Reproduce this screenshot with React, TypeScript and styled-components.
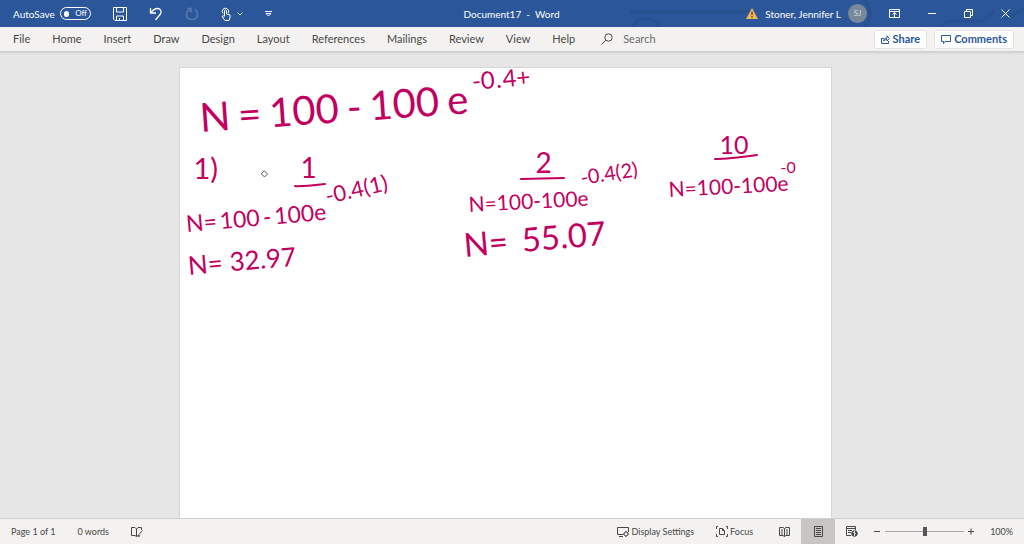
import React from "react";
import styled, { createGlobalStyle } from "styled-components";

const Global = createGlobalStyle`
  * { box-sizing: border-box; }
  body { margin: 0; font-family: Lato, "Open Sans", sans-serif; font-size: 11px; line-height: 16px; color: #484848; }
  button { font: inherit; color: inherit; background: none; border: 0; padding: 0; margin: 0; }
  svg { display: block; flex: none; }
`;

const Shell = styled.div`
  min-height: 100vh;
  display: flex;
  flex-direction: column;
  background: #e6e6e6;
`;

const TitleBar = styled.header`
  position: relative;
  display: grid;
  grid-template-columns: 1fr auto 1fr;
  align-items: center;
  height: 27px;
  padding: 0 14px 0 13px;
  background: #2b579a;
  color: #fff;
  font-size: 10px;
`;

const Pattern = styled.svg`
  position: absolute;
  top: 0;
  right: 0;
`;

const QuickAccess = styled.div`
  display: flex;
  align-items: center;
  gap: 22px;
`;

const AutoSave = styled.label`
  display: flex;
  align-items: center;
  gap: 5px;
`;

const Toggle = styled.button`
  display: flex;
  align-items: center;
  gap: 6px;
  width: 31px;
  height: 13px;
  padding: 0 3px;
  border: 1px solid #fff;
  border-radius: 7px;
  font-size: 8px;
  line-height: 11px;
  &::before { content: ""; width: 6px; height: 6px; border-radius: 50%; background: #fff; }
`;

const IconButton = styled.button<{ $dim?: boolean }>`
  display: flex;
  align-items: center;
  gap: 6px;
  opacity: ${(p) => (p.$dim ? 0.2 : 1)};
`;

const DocTitle = styled.h1`
  margin: 0;
  font-size: 10px;
  font-weight: 400;
  white-space: pre;
`;

const WindowTools = styled.div`
  position: relative;
  display: flex;
  align-items: center;
  justify-content: flex-end;
  gap: 28px;
`;

const Account = styled.button`
  display: flex;
  align-items: center;
  gap: 7px;
  margin-right: -6px;
`;

const Avatar = styled.span`
  width: 19px;
  height: 19px;
  border-radius: 50%;
  background: #78899a;
  color: #d5dce2;
  font-size: 8px;
  line-height: 19px;
  text-align: center;
`;

const Ribbon = styled.nav`
  display: flex;
  align-items: center;
  gap: 22px;
  height: 25px;
  padding: 0 10px 0 13px;
  background: #f3f2f1;
  border-bottom: 1px solid #d2d0ce;
  box-shadow: 0 1px 2px #cfcfcf;
`;

const Tab = styled.button``;

const Search = styled.label`
  display: flex;
  align-items: center;
  gap: 10px;
  margin-left: 4px;
`;

const SearchBox = styled.input`
  width: 80px;
  padding: 0;
  border: 0;
  outline: 0;
  background: none;
  font: inherit;
  &::placeholder { color: #6a6a6a; opacity: 1; }
`;

const RibbonActions = styled.div`
  display: flex;
  gap: 7px;
  margin-left: auto;
`;

const ActionButton = styled.button`
  display: flex;
  align-items: center;
  gap: 3px;
  height: 19px;
  padding: 0 6px;
  border: 1px solid #e6e5e4;
  border-radius: 2px;
  background: #fff;
  color: #2b579a;
  font-weight: 700;
`;

const Workspace = styled.main`
  flex: 1;
  display: flex;
  justify-content: center;
  padding: 15px 14px 0 0;
`;

const Paper = styled.article`
  position: relative;
  width: 100%;
  max-width: 653px;
  background: #fff;
  border: 1px solid #d6d6d6;
  border-bottom: 0;
`;

const Ink = styled.div<{ $x: number; $y: number; $size: number; $tilt?: number; $gap?: number }>`
  position: absolute;
  left: ${(p) => p.$x}px;
  top: ${(p) => p.$y}px;
  display: flex;
  gap: ${(p) => p.$gap ?? 0}px;
  color: #c2005f;
  font-size: ${(p) => p.$size}px;
  line-height: 1;
  white-space: nowrap;
  transform: rotate(${(p) => p.$tilt ?? 0}deg);
  transform-origin: left bottom;
`;

const Rules = styled.svg`
  position: absolute;
  left: 0;
  top: 0;
`;

const StatusBar = styled.footer`
  display: flex;
  align-items: center;
  height: 26px;
  padding: 0 11px;
  background: #f3f2f1;
  border-top: 1px solid #d2d0ce;
  font-size: 9px;
`;

const StatusGroup = styled.div`
  display: flex;
  align-items: center;
  gap: 22px;
`;

const StatusRight = styled.div`
  display: flex;
  align-items: center;
  gap: 22px;
  margin-left: auto;
`;

const StatusButton = styled.button`
  display: flex;
  align-items: center;
  gap: 2px;
`;

const Views = styled.div`
  display: flex;
  margin-left: -8px;
`;

const ViewButton = styled.button<{ $active?: boolean }>`
  display: flex;
  align-items: center;
  justify-content: center;
  width: 34px;
  height: 25px;
  background: ${(p) => (p.$active ? "#c8c6c4" : "none")};
`;

const Zoom = styled.div`
  display: flex;
  align-items: center;
  gap: 4px;
  margin-left: -17px;
`;

const Slider = styled.input`
  width: 79px;
  height: 12px;
  margin: 0;
  appearance: none;
  background: linear-gradient(#a6a6a6, #a6a6a6) center / 100% 1px no-repeat;
  &::-webkit-slider-thumb { appearance: none; width: 4px; height: 9px; background: #555; }
`;

const ZoomValue = styled.button`
  margin-left: 11px;
`;

const Icon = ({ w, h, children, sw = 1 }: { w: number; h: number; sw?: number; children: React.ReactNode }) => (
  <svg width={w} height={h} viewBox={`0 0 ${w} ${h}`} fill="none" stroke="currentColor" strokeWidth={sw} aria-hidden="true">
    {children}
  </svg>
);

const tabs = ["File", "Home", "Insert", "Draw", "Design", "Layout", "References", "Mailings", "Review", "View", "Help"];

const notes = [
  { x: 21, y: 29, size: 40, tilt: -4, gap: 8, parts: ["N", "=", "100", "-", "100", "e"] },
  { x: 293, y: 1, size: 24, tilt: -5, gap: 1, parts: ["-0", ".", "4+"] },
  { x: 14, y: 85, size: 29, parts: ["1)"] },
  { x: 121, y: 85, size: 28, parts: ["1"] },
  { x: 7, y: 144, size: 23, tilt: -5, gap: 3, parts: ["N=", "100", "-", "100e"] },
  { x: 148, y: 117, size: 22, tilt: -13, parts: ["-0.4(1)"] },
  { x: 9, y: 184, size: 26, tilt: -5, gap: 7, parts: ["N=", "32.97"] },
  { x: 356, y: 80, size: 28, parts: ["2"] },
  { x: 289, y: 125, size: 21, tilt: -3, parts: ["N=100", "-", "100e"] },
  { x: 402, y: 99, size: 20, tilt: -9, parts: ["-0.4(2)"] },
  { x: 285, y: 160, size: 33, tilt: -5, gap: 14, parts: ["N=", "55.07"] },
  { x: 540, y: 64, size: 25, parts: ["10"] },
  { x: 489, y: 110, size: 21, tilt: -3, parts: ["N=100", "-", "100e"] },
  { x: 601, y: 91, size: 16, parts: ["-0"] },
];

export default function App() {
  return (
    <Shell>
      <Global />
      <TitleBar>
        <Pattern width="404" height="27" fill="none" stroke="#28518f" strokeWidth="3" aria-hidden="true">
          <path d="M10 12H130M12 27C18 16 34 16 40 27M244 0C252 8 252 18 244 27M318 27L330 21H362L374 12M385 20L404 8" />
        </Pattern>
        <QuickAccess>
          <AutoSave htmlFor="autosave">
            AutoSave
            <Toggle id="autosave" role="switch" aria-checked="false">Off</Toggle>
          </AutoSave>
          <IconButton aria-label="Save">
            <Icon w={14} h={14}><path d="M.5.5h13v13H2l-1.500-1.500zM3.500.5V5h7V.5M3.500 13.500V9h7v4.500M6.500 11v2" /></Icon>
          </IconButton>
          <IconButton aria-label="Undo">
            <Icon w={14} h={14} sw={1.3}><path d="M1.500 1v5H7M2 5.500C4 3 6 1.500 8.500 1.500c3 0 4.500 3 3 5.500L6.500 13" /></Icon>
          </IconButton>
          <IconButton aria-label="Redo" $dim>
            <Icon w={14} h={14} sw={1.6}><path d="M2 1.500h4v4M5 3C0 4 0 12 6.500 12.500S14 6 10 2.500" /></Icon>
          </IconButton>
          <IconButton aria-label="Touch mode">
            <Icon w={10} h={14}><path d="M3.500 9V3.500q1-1 2 0V7l3.500.8v3L8 13.500H4L1 9.500q1-1.500 2.500 0M2 6.500A3.200 3.200 0 1 1 7.200 6" /></Icon>
            <Icon w={6} h={4}><path d="M.5.5 3 3 5.500.5" /></Icon>
          </IconButton>
          <IconButton aria-label="Customize">
            <Icon w={7} h={6}><path d="M0 .5h7M1 2.500h5L3.500 5z" /></Icon>
          </IconButton>
        </QuickAccess>
        <DocTitle>Document17  -  Word</DocTitle>
        <WindowTools>
          <Account>
            <svg width="12" height="11" viewBox="0 0 12 11" aria-hidden="true">
              <path d="M6 0 12 11H0z" fill="#f0b45a" /><path d="M6 3.500V7M6 8v1.500" stroke="#5a3a1a" strokeWidth="1.300" />
            </svg>
            Stoner, Jennifer L
            <Avatar>SJ</Avatar>
          </Account>
          <IconButton aria-label="Ribbon display options">
            <Icon w={11} h={9}><path d="M.5.5h10v8H.5zM.5 2.500h10M5.500 8V4M3.500 5.500l2-2 2 2" /></Icon>
          </IconButton>
          <IconButton aria-label="Minimize"><Icon w={8} h={9}><path d="M0 4.500h8" /></Icon></IconButton>
          <IconButton aria-label="Restore"><Icon w={9} h={9}><path d="M.5 2.500h6v6h-6zM2.500 2.500v-2h6v6h-2" /></Icon></IconButton>
          <IconButton aria-label="Close"><Icon w={9} h={9}><path d="m.5.5 8 8M8.500.5l-8 8" /></Icon></IconButton>
        </WindowTools>
      </TitleBar>
      <Ribbon>
        {tabs.map((t) => <Tab key={t}>{t}</Tab>)}
        <Search>
          <Icon w={12} h={12}><circle cx="7.500" cy="4.500" r="3.700" /><path d="M4.800 7.200.5 11.500" /></Icon>
          <SearchBox type="search" placeholder="Search" aria-label="Search" />
        </Search>
        <RibbonActions>
          <ActionButton>
            <Icon w={9} h={9}><path d="M3 3.500H.5v5h7V6M2.500 6q.5-3 3.500-3V.8L8.500 3.500 6 6V4.500Q4 4.500 2.500 6z" /></Icon>
            Share
          </ActionButton>
          <ActionButton>
            <Icon w={10} h={9}><path d="M.5.5h9v6H4L2.500 8.500v-2h-2z" /></Icon>
            Comments
          </ActionButton>
        </RibbonActions>
      </Ribbon>
      <Workspace>
        <Paper>
          {notes.map((n, i) => (
            <Ink key={i} $x={n.x} $y={n.y} $size={n.size} $tilt={n.tilt} $gap={n.gap}>
              {n.parts.map((part, j) => <span key={j}>{part}</span>)}
            </Ink>
          ))}
          <Rules width="600" height="200" fill="none" stroke="#c2005f" strokeWidth="2" strokeLinecap="round" aria-hidden="true">
            <path d="M115 118Q118 119 145 116M341 111 384 110M535 91Q548 91 577 87" />
            <path d="m84.500 103 3 3-3 3-3-3z" stroke="#555" strokeWidth="1" />
          </Rules>
        </Paper>
      </Workspace>
      <StatusBar>
        <StatusGroup>
          <StatusButton>Page 1 of 1</StatusButton>
          <StatusButton>0 words</StatusButton>
          <StatusButton aria-label="Proofing">
            <Icon w={12} h={10}><path d="M5.500 2v7.500L4 8.500H.5v-8H4L5.500 2 7 .5h3.500V3M5.500 9.500l1.500-1M11.500 3.500 8 7.500l-.8 2 2-.8" /></Icon>
          </StatusButton>
        </StatusGroup>
        <StatusRight>
          <StatusButton>
            <Icon w={12} h={10}><path d="M6 7.500H.5v-7h11V5M2 9.500h4" /><circle cx="9" cy="7" r="2" /><path d="M9 4v1M9 9v1M6 7h1M11 7h1" /></Icon>
            Display Settings
          </StatusButton>
          <StatusButton>
            <Icon w={12} h={11}><path d="M3.500 2.500h3l2 2v4h-5zM6.500 2.500v2h2M.5 3V.5H2M10 .5h1.500V3M.5 8v2.500H2M10 10.500h1.500V8" /></Icon>
            Focus
          </StatusButton>
          <Views>
            <ViewButton aria-label="Read mode">
              <Icon w={11} h={10}><path d="M5.500 1.500v8L4 8.500H.5v-8H4l1.500 1L7 .5h3.500v8H7l-1.500 1M2 3h2M2 5h2M2 7h2M7 3h2M7 5h2M7 7h2" /></Icon>
            </ViewButton>
            <ViewButton aria-label="Print layout" aria-pressed="true" $active>
              <Icon w={9} h={11}><path d="M.5.5h8v10h-8zM2 2.500h5M2 4.500h5M2 6.500h5M2 8.500h5" /></Icon>
            </ViewButton>
            <ViewButton aria-label="Web layout">
              <Icon w={12} h={11}><path d="M5 9.500H.5v-9h9V4M.5 2.500h9M2 4.500h4M2 6.500h3" /><circle cx="8.500" cy="7.500" r="2.800" fill="currentColor" /><path d="M8.500 5v5M7 6l3 2" stroke="#ddd" /></Icon>
            </ViewButton>
          </Views>
          <Zoom>
            <IconButton aria-label="Zoom out"><Icon w={7} h={7}><path d="M0 3.500h6" /></Icon></IconButton>
            <Slider type="range" min={0} max={100} defaultValue={50} aria-label="Zoom" />
            <IconButton aria-label="Zoom in"><Icon w={7} h={7}><path d="M0 3.500h6M3 .5v6" /></Icon></IconButton>
            <ZoomValue>100%</ZoomValue>
          </Zoom>
        </StatusRight>
      </StatusBar>
    </Shell>
  );
}
